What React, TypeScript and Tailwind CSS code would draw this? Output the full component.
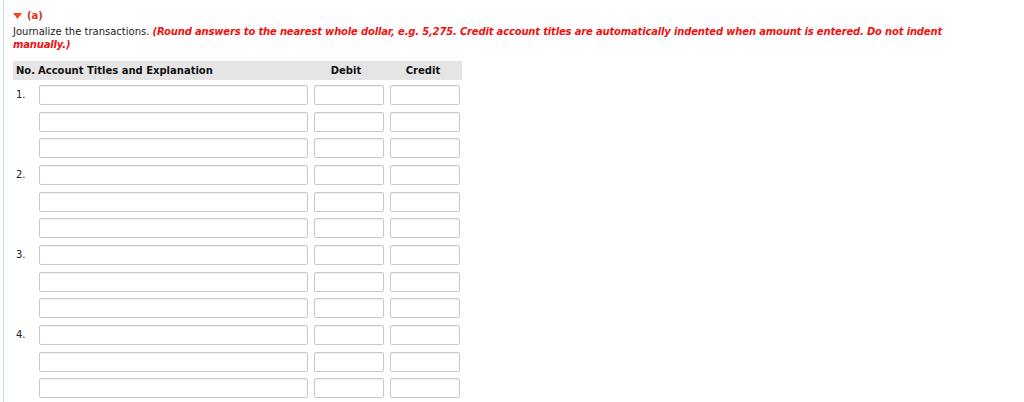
export default function App() {
  const groups = ["1.", "2.", "3.", "4."];
  const rows: string[] = [];
  groups.forEach((g) => {
    rows.push(g, "", "");
  });

  return (
    <div className="w-[1024px] h-[402px] overflow-hidden bg-white font-['DejaVu_Sans',Verdana,sans-serif] text-[10px] text-[#222]">
      <div className="ml-[3px] h-full border-l border-[#c5d9ee] pl-[9px] pt-[9px]">
        {/* Part header */}
        <div className="flex items-center gap-[5px] h-[12px]">
          <svg width="9" height="6" viewBox="0 0 9 6" className="mt-[1px]">
            <path d="M0 0 H9 L4.5 6 Z" fill="#f04a1e" />
          </svg>
          <span className="font-bold text-[#d9301c]">(a)</span>
        </div>

        {/* Instructions */}
        <p className="mt-[4px] w-[960px] leading-[13px]">
          Journalize the transactions.{" "}
          <span className="font-bold italic text-[#f01010] tracking-[-0.17px]">
            (Round answers to the nearest whole dollar, e.g. 5,275. Credit account titles are automatically indented when amount is entered. Do not indent manually.)
          </span>
        </p>

        {/* Journal table */}
        <div className="mt-[10px] w-[449px]">
          <div className="flex items-center h-[19px] bg-[#e5e5e5] font-bold text-[#111]">
            <span className="w-[25px] pl-[3px]">No.</span>
            <span className="w-[270px]">Account Titles and Explanation</span>
            <span className="w-[76px] text-center">Debit</span>
            <span className="w-[78px] text-center">Credit</span>
          </div>
          <div className="pt-[5px]">
            {rows.map((label, i) => (
              <div key={i} className="flex items-start h-[26.667px]">
                <span className="w-[26px] pl-[3px] pt-[2px] text-[#222]">{label}</span>
                <input className="w-[269px] h-[20px] rounded-[2px] border border-[#c8c8c8] bg-white shadow-[inset_0_1px_1px_rgba(0,0,0,0.06)]" />
                <input className="ml-[6px] w-[70px] h-[20px] rounded-[2px] border border-[#c8c8c8] bg-white shadow-[inset_0_1px_1px_rgba(0,0,0,0.06)]" />
                <input className="ml-[6px] w-[70px] h-[20px] rounded-[2px] border border-[#c8c8c8] bg-white shadow-[inset_0_1px_1px_rgba(0,0,0,0.06)]" />
              </div>
            ))}
          </div>
        </div>
      </div>
    </div>
  );
}
